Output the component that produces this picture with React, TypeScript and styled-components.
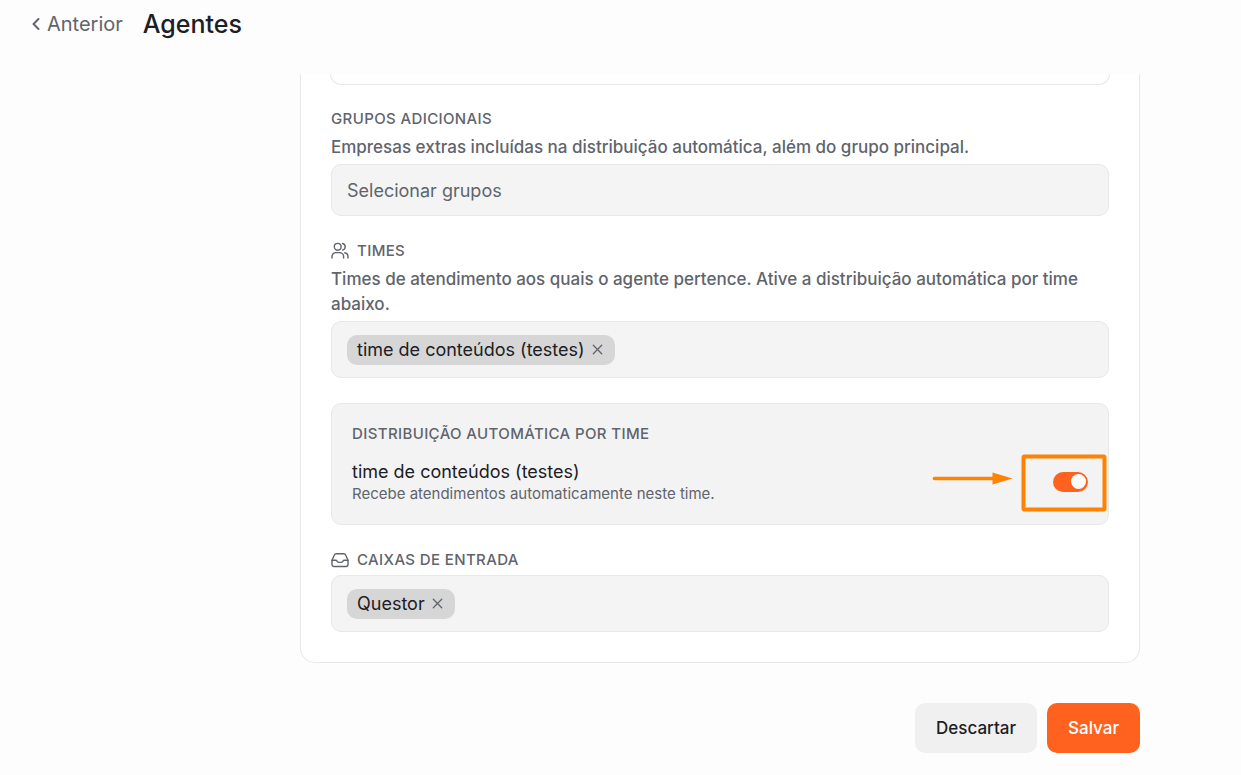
import React, { useState } from "react";
import styled, { createGlobalStyle, css } from "styled-components";
import { ChevronLeft } from "lucide-react";

const color = {
  page: "#fdfdfd",
  text: "#1c2024",
  muted: "#60646c",
  line: "#e8e8e8",
  field: "#f4f4f4",
  panel: "#f3f3f3",
  chip: "#d6d6d6",
  brand: "#ff621f",
  note: "#ff8200",
};

const GlobalStyle = createGlobalStyle`
  *, *::before, *::after { box-sizing: border-box; }
  body {
    margin: 0;
    background: ${color.page};
    color: ${color.text};
    font-family: Inter, "Liberation Sans", sans-serif;
    font-size: 17px;
    line-height: 25px;
  }
  button, select, input { font: inherit; color: inherit; margin: 0; }
  h1, h2, p, ul { margin: 0; padding: 0; }
`;

const Header = styled.header`
  display: flex;
  align-items: center;
  gap: 20px;
  height: 48px;
  padding: 0 30px;
  margin-bottom: 26px;
`;

const BackLink = styled.a`
  display: flex;
  align-items: center;
  gap: 1px;
  font-size: 20px;
  color: ${color.muted};
  text-decoration: none;

  svg { margin-left: -4px; }
`;

const Title = styled.h1`
  font-size: 25px;
  line-height: 32px;
  font-weight: 500;
`;

const Content = styled.main`
  padding: 0 101px 22px 300px;
`;

const Card = styled.section`
  display: flex;
  flex-direction: column;
  gap: 25px;
  padding: 0 30px 30px;
  background: #fff;
  border: 1px solid ${color.line};
  border-top: 0;
  border-radius: 0 0 15px 15px;
`;

const PreviousField = styled.div`
  height: 11px;
  margin: 0 -1px -1px;
  border: 1px solid ${color.line};
  border-top: 0;
  border-radius: 0 0 11px 11px;
`;

const Group = styled.div`
  display: flex;
  flex-direction: column;
  gap: 5px;
`;

const caps = css`
  font-size: 15px;
  line-height: 20px;
  font-weight: 500;
  letter-spacing: 0.025em;
  text-transform: uppercase;
  color: ${color.muted};
`;

const GroupLabel = styled.label`
  display: flex;
  align-items: center;
  ${caps}
`;

const GroupTitle = styled.h2`
  display: flex;
  align-items: center;
  gap: 8px;
  ${caps}
`;

const Description = styled.p`
  margin: 1px 0 -1px;
  color: ${color.muted};
  font-weight: 500;
`;

const fieldBox = css`
  border: 1px solid ${color.line};
  border-radius: 10px;
  background: ${color.field};
`;

const Select = styled.select`
  && {
    ${fieldBox}
    appearance: none;
    width: 100%;
    height: 52px;
    padding: 0 15px;
    color: ${color.muted};
    font-size: 18px;
  }
`;

const TagField = styled.ul`
  ${fieldBox}
  display: flex;
  flex-wrap: wrap;
  align-items: center;
  gap: 8px;
  min-height: 57px;
  padding: 0 15px;
  list-style: none;
`;

const Tag = styled.li`
  display: flex;
  align-items: center;
  gap: 5px;
  height: 30px;
  padding: 0 10px;
  border-radius: 10px;
  background: ${color.chip};
  font-size: 18px;
`;

const TagRemove = styled.button`
  display: flex;
  padding: 0;
  border: 0;
  background: none;
  color: ${color.muted};
  cursor: pointer;
`;

const Panel = styled.div`
  display: flex;
  flex-direction: column;
  gap: 15px;
  padding: 20px;
  border: 1px solid ${color.line};
  border-radius: 10px;
  background: ${color.panel};
`;

const TeamRow = styled.div`
  display: flex;
  align-items: center;
  justify-content: space-between;
`;

const TeamLabel = styled.label`
  display: block;
  font-size: 18px;
`;

const TeamHint = styled.p`
  font-size: 15px;
  line-height: 20px;
  color: ${color.muted};
`;

const SwitchArea = styled.div`
  position: relative;
  display: flex;
`;

const Switch = styled.input`
  appearance: none;
  display: flex;
  align-items: center;
  width: 35px;
  height: 20px;
  padding: 0 2px;
  border-radius: 10px;
  background: #cdced6;
  cursor: pointer;

  &::before {
    content: "";
    width: 15px;
    height: 15px;
    border-radius: 50%;
    background: #fff;
  }

  &:checked {
    justify-content: flex-end;
    background: ${color.brand};
  }
`;

const Callout = styled.svg`
  position: absolute;
  right: -19px;
  top: -18px;
  pointer-events: none;
`;

const Actions = styled.footer`
  display: flex;
  justify-content: flex-end;
  gap: 10px;
  margin-top: 40px;
`;

const Button = styled.button<{ $primary?: boolean }>`
  height: 50px;
  padding: 0 21px;
  border: 0;
  border-radius: 10px;
  font-weight: 500;
  cursor: pointer;
  background: ${(p) => (p.$primary ? color.brand : "#f0f0f0")};
  color: ${(p) => (p.$primary ? "#fff" : color.text)};
`;

const UsersIcon = () => (
  <svg width="18" height="18" viewBox="0 0 18 18" fill="none" stroke="currentColor" strokeWidth="1.4" strokeLinecap="round" strokeLinejoin="round" aria-hidden="true">
    <circle cx="6.7" cy="4.8" r="3.4" />
    <path d="M1 16v-1.4a4 4 0 0 1 4-4h3.6a4 4 0 0 1 4 4V16" />
    <path d="M11.6 1.5a3.4 3.4 0 0 1 0 6.6" />
    <path d="M13.8 10.8a4 4 0 0 1 3.2 3.9V16" />
  </svg>
);

const InboxIcon = () => (
  <svg width="18" height="18" viewBox="0 0 18 18" fill="none" stroke="currentColor" strokeWidth="1.4" strokeLinecap="round" strokeLinejoin="round" aria-hidden="true">
    <path d="M1 9.2 3.4 4a2 2 0 0 1 1.8-1.2h7.6A2 2 0 0 1 14.6 4L17 9.2v4.3a2 2 0 0 1-2 2H3a2 2 0 0 1-2-2z" />
    <path d="M1 9.2h3.8c.9 0 1 .5 1.4 1.2.5.8 1 1 1.8 1h2c.8 0 1.3-.2 1.8-1 .4-.7.5-1.2 1.4-1.2H17" />
  </svg>
);

const CloseIcon = () => (
  <svg width="15" height="15" viewBox="0 0 15 15" fill="none" stroke="currentColor" strokeWidth="1.3" strokeLinecap="round" aria-hidden="true">
    <path d="m3.3 3.3 8.4 8.4M11.7 3.3l-8.4 8.4" />
  </svg>
);

const Tags = ({ initial }: { initial: string[] }) => {
  const [items, setItems] = useState(initial);
  return (
    <TagField>
      {items.map((name) => (
        <Tag key={name}>
          {name}
          <TagRemove type="button" aria-label={`Remover ${name}`} onClick={() => setItems(items.filter((i) => i !== name))}>
            <CloseIcon />
          </TagRemove>
        </Tag>
      ))}
    </TagField>
  );
};

export default function App() {
  const [enabled, setEnabled] = useState(true);

  return (
    <>
      <GlobalStyle />
      <Header>
        <BackLink href="#">
          <ChevronLeft size={20} strokeWidth={2.4} aria-hidden="true" />
          Anterior
        </BackLink>
        <Title>Agentes</Title>
      </Header>
      <Content>
        <Card>
          <PreviousField />
          <Group>
            <GroupLabel htmlFor="groups">Grupos adicionais</GroupLabel>
            <Description>Empresas extras incluídas na distribuição automática, além do grupo principal.</Description>
            <Select id="groups">
              <option>Selecionar grupos</option>
            </Select>
          </Group>
          <Group>
            <GroupTitle>
              <UsersIcon />
              Times
            </GroupTitle>
            <Description>
              Times de atendimento aos quais o agente pertence. Ative a distribuição automática por time abaixo.
            </Description>
            <Tags initial={["time de conteúdos (testes)"]} />
          </Group>
          <Panel>
            <GroupTitle>Distribuição automática por time</GroupTitle>
            <TeamRow>
              <div>
                <TeamLabel htmlFor="team-switch">time de conteúdos (testes)</TeamLabel>
                <TeamHint>Recebe atendimentos automaticamente neste time.</TeamHint>
              </div>
              <SwitchArea>
                <Switch
                  id="team-switch"
                  type="checkbox"
                  role="switch"
                  checked={enabled}
                  onChange={(e) => setEnabled(e.target.checked)}
                />
                <Callout width="176" height="58" viewBox="0 0 176 58" aria-hidden="true">
                  <path d="M3.5 24.5h60" stroke={color.note} strokeWidth="3.6" strokeLinecap="round" />
                  <path d="m61.5 18.500 20 6-20 6z" fill={color.note} />
                  <rect x="92.5" y="2.5" width="81" height="53" rx="1" fill="none" stroke={color.note} strokeWidth="4" />
                </Callout>
              </SwitchArea>
            </TeamRow>
          </Panel>
          <Group>
            <GroupTitle>
              <InboxIcon />
              Caixas de entrada
            </GroupTitle>
            <Tags initial={["Questor"]} />
          </Group>
        </Card>
        <Actions>
          <Button type="button">Descartar</Button>
          <Button type="button" $primary>
            Salvar
          </Button>
        </Actions>
      </Content>
    </>
  );
}
